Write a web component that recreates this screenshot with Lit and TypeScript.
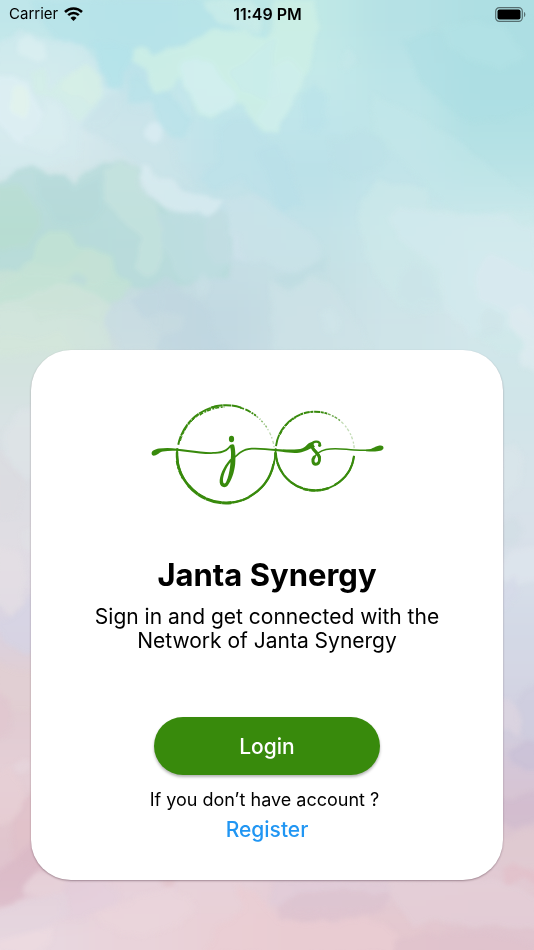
import { LitElement, html, svg, css } from "lit";
import { customElement } from "lit/decorators.js";

/** Broad washes of the sky: one row per band, one colour per column. */
const bands: { y: number; h: number; c: string[] }[] = [
  { y: -60, h: 110, c: ["#bfe6ea", "#b8e3e8", "#bce6e7", "#bfe8e6", "#b5e1e5", "#aedfe3"] },
  { y: 50, h: 50, c: ["#d2ecec", "#bde3ea", "#c6eaeb", "#c4e9e9", "#bbe4e8", "#addfe3"] },
  { y: 100, h: 50, c: ["#dbecf0", "#cfe6ec", "#bee4ea", "#bfe5ea", "#bfe5e8", "#b1e0e4"] },
  { y: 150, h: 50, c: ["#d4e7ea", "#cfe4e8", "#c1e2e9", "#bae0e8", "#c1e4e9", "#bae3e6"] },
  { y: 200, h: 50, c: ["#bcdcd6", "#c2dfdf", "#c6e1e7", "#c3e3e8", "#c9e6ea", "#d0e9ec"] },
  { y: 250, h: 50, c: ["#c6e1d6", "#c3dddd", "#c5dde4", "#c5e0e4", "#cce5e9", "#d5e9ed"] },
  { y: 300, h: 50, c: ["#d2e5dc", "#c9dae2", "#c1d8e1", "#c9dfe5", "#cee3e8", "#d3e7eb"] },
  { y: 350, h: 50, c: ["#d3e3df", "#d3e3df", "#c6dbe3", "#cbe1e6", "#cfe6e9", "#cfe6e9"] },
  { y: 400, h: 50, c: ["#d9e2e5", "#d9e2e5", "#d3e3e8", "#d3e3e8", "#d3e5ea", "#d2e4e9"] },
  { y: 450, h: 50, c: ["#dadde2", "#dadde2", "#dadde2", "#d8e0e6", "#d6e3ea", "#d6e3e9"] },
  { y: 500, h: 50, c: ["#dfdde3", "#dfdde3", "#dfdde3", "#d8e0e8", "#d6e0e8", "#d8e1e9"] },
  { y: 550, h: 50, c: ["#e1dce4", "#e0dce4", "#dedce4", "#d8dee8", "#d7dfe9", "#d7dfe9"] },
  { y: 600, h: 50, c: ["#d8d3e2", "#d8d3e2", "#d8d3e2", "#d4d8e4", "#d3dae6", "#d3d9e6"] },
  { y: 650, h: 50, c: ["#e1ced3", "#e1ced3", "#e1ced3", "#d9d5e0", "#d6d8e5", "#d4d6e4"] },
  { y: 700, h: 50, c: ["#e1cbd2", "#e1cbd2", "#e1cbd2", "#d8d0de", "#d5d2e1", "#d1cfdf"] },
  { y: 750, h: 50, c: ["#e5d0d7", "#e4cfd7", "#e0ccd6", "#d8cbd9", "#d6c8d7", "#d5c5d6"] },
  { y: 800, h: 50, c: ["#e1c6cd", "#e0c4cd", "#e0c8d1", "#dcc6d2", "#d8c4d1", "#dac4d0"] },
  { y: 850, h: 50, c: ["#dfc3ce", "#e6d1db", "#e7d2da", "#e2ccd8", "#e2ccd6", "#e3ccd4"] },
  { y: 900, h: 110, c: ["#e8d7df", "#e9d3da", "#e9d0d6", "#e6cad1", "#e4c8cf", "#e0c5cf"] },
];

/** Watercolour edges laid over the washes: [colour, opacity, outline]. */
const strokes: [string, number, string][] = [
  // upper left haze
  ["#b5e2e8", 0.8, "M30 0L210 0L262 30L268 38L240 30L215 28L185 48L150 55L130 45L95 48L55 42L45 25Z"],
  ["#d3eaee", 0.7, "M-5 45L20 30L60 42L85 45L98 65L102 85L118 92L120 110L100 125L80 130L80 160L-5 180Z"],
  ["#ddf0f3", 0.8, "M16 40L28 35L44 42L47 60L36 63L18 52Z"],
  ["#d2eee6", 0.85, "M30 72L44 68L48 92L60 80L84 64L98 72L103 95L96 106L78 122L64 105L50 95L36 95Z"],
  ["#d8f0e5", 0.7, "M68 72L88 64L98 75L103 92L92 106L80 96L60 90Z"],
  ["#def0f5", 0.9, "M-5 76L15 75L29 85L34 98L44 115L40 130L24 138L22 146L10 132L-5 120Z"],
  ["#e4f4ec", 0.95, "M11 90L19 86L28 92L28 110L22 117L12 112Z"],
  ["#d9edf0", 0.7, "M45 98L62 108L68 140L50 153L20 145L36 128L44 120Z"],
  ["#b3e3ea", 0.85, "M91 40L132 45L134 60L124 72L122 88L108 86L100 68Z"],
  ["#c8e3e8", 0.75, "M80 128L105 95L125 92L135 110L150 112L165 130L178 165L198 190L170 180L135 165L110 140Z"],
  ["#d9ecf2", 0.95, "M144 132L148 123L160 121L165 130L163 140L154 145L145 140Z"],
  // pale green cloud
  ["#cdeee8", 0.8, "M202 0L250 0L258 8L262 34L245 30L215 20L205 10Z"],
  ["#cdefe6", 0.95, "M133 49L140 46L149 49L152 55L165 49L185 45L200 36L212 27L224 31L244 30L266 39L272 30L276 0L315 0L318 30L312 62L304 84L292 98L284 118L278 132L264 132L252 122L244 105L232 100L214 118L196 114L190 95L178 78L170 88L158 93L148 82L146 68L134 62Z"],
  ["#d4eff0", 0.9, "M182 62L196 58L214 66L226 84L238 97L232 105L212 116L198 112L190 92L180 78Z"],
  ["#cbeceb", 0.8, "M232 70L246 62L262 45L274 40L274 64L282 94L266 100L254 92L240 90Z"],
  ["#d1efec", 0.8, "M274 66L290 60L304 75L298 90L288 105L280 128L268 132L256 120L268 102Z"],
  ["#b7e2e9", 0.85, "M130 78L136 72L148 84L158 92L170 90L182 105L194 122L184 138L168 134L156 118L152 102L126 102Z"],
  // centre blues
  ["#b8e2e9", 0.65, "M302 95L315 84L326 98L326 124L316 134L302 128Z"],
  ["#bbe1e9", 0.8, "M218 130L235 116L250 118L262 138L280 146L290 162L296 185L302 205L285 212L262 196L240 180L214 190L200 178L218 160Z"],
  ["#b8dfe7", 0.55, "M256 150L276 145L290 165L302 205L282 212L272 188Z"],
  ["#bbe1e7", 0.65, "M330 138L348 136L364 130L382 138L390 158L376 170L350 176L332 168Z"],
  ["#c6e8e9", 0.6, "M342 52L350 48L355 62L348 70L340 64Z"],
  ["#c4e8ea", 0.5, "M370 92L392 104L430 122L470 150L520 190L540 200L540 225L450 210L400 160L375 130Z"],
  ["#abdde2", 0.6, "M404 40L430 32L470 20L540 18L540 105L500 120L470 122L444 105L420 80Z"],
  ["#b6e3e5", 0.5, "M440 25L475 20L505 28L525 55L500 70L470 60L450 48Z"],
  // dark teal bank on the left
  ["#b5dad9", 0.9, "M-5 185L6 180L14 170L32 165L46 171L52 176L66 174L72 186L86 172L106 162L126 162L140 170L138 184L152 200L168 212L186 216L204 222L216 210L226 216L232 250L230 275L160 290L-5 270Z"],
  ["#b2d8da", 0.7, "M35 174L66 176L74 188L100 174L104 212L78 226L56 222L40 200Z"],
  ["#b7dcd0", 0.75, "M-5 186L20 184L38 210L42 226L28 246L-5 250Z"],
  ["#c4e2de", 0.85, "M104 168L118 162L136 166L138 182L158 210L164 240L160 270L146 278L134 268L142 240L124 222L104 200Z"],
  ["#d8ebf0", 0.95, "M138 178L140 166L150 166L154 176L170 178L184 190L206 196L226 202L218 210L208 218L198 210L178 212L160 206L148 192Z"],
  ["#bddde0", 0.85, "M156 216L170 214L190 210L204 216L216 212L226 218L228 240L232 262L215 280L180 280L165 250Z"],
  ["#c3dce3", 0.75, "M206 218L218 210L226 216L228 244L234 262L214 264L206 244Z"],
  // green meadow tones
  ["#c1e2d4", 0.9, "M38 242L50 230L68 232L78 246L98 250L112 256L118 276L132 284L120 300L60 310L-5 310L-5 290L28 268Z"],
  ["#c6e3d5", 0.7, "M28 262L62 268L86 250L110 256L112 276L98 288L60 284L34 292L-5 302L-5 288Z"],
  ["#b9dadb", 0.75, "M66 282L76 272L88 280L84 286Z"],
  ["#d0e4dc", 0.9, "M-5 306L28 296L60 284L90 292L110 304L104 325L112 350L-5 352Z"],
  ["#cde3d8", 0.8, "M22 300L60 286L95 295L108 305L104 322L70 315L40 320Z"],
  ["#d3e6da", 0.8, "M-5 335L30 338L60 332L75 350L-5 356Z"],
  ["#c9dde3", 0.7, "M118 340L104 328L108 310L134 292L160 290L160 350L120 352Z"],
  ["#bfd6e0", 0.8, "M130 300L150 286L168 276L182 290L205 306L214 330L228 352L155 352L160 330L140 314Z"],
  ["#c7dbe1", 0.7, "M146 318L160 312L184 316L182 330L162 336L150 345Z"],
  // centre lower
  ["#cbe3e9", 0.6, "M226 200L256 192L285 215L310 232L325 248L318 262L290 274L262 262L240 262L230 240Z"],
  ["#cfe3eb", 0.7, "M228 232L238 238L246 262L234 258Z"],
  ["#bddce1", 0.7, "M275 276L300 272L316 262L328 260L326 272L310 272L304 284L292 292L276 282Z"],
  ["#c9e0e5", 0.7, "M196 282L204 272L212 284L206 298L196 296Z"],
  ["#cde3e7", 0.7, "M270 280L290 294L310 276L330 284L350 310L372 352L270 352L272 320Z"],
  ["#d2e7eb", 0.6, "M320 312L332 308L340 318L336 334L324 330Z"],
  // right pale bank
  ["#cdeaea", 0.6, "M358 214L364 196L380 180L398 184L428 188L430 208L470 214L534 210L540 360L500 352L470 330L440 300L400 308L380 280L362 245Z"],
  ["#d4eaee", 0.7, "M400 206L445 214L500 214L540 230L540 340L490 325L470 335L444 310L440 270L400 240L388 220Z"],
  ["#cce5e8", 0.8, "M398 276L410 262L430 270L440 292L445 312L412 314L398 298Z"],
  ["#d9eaf0", 0.8, "M476 270L492 250L510 264L534 274L540 330L520 322L500 306L478 300Z"],
  ["#cee4e8", 0.7, "M478 320L488 308L504 316L502 334L482 338Z"],
  ["#deebf0", 0.85, "M508 310L522 306L540 326L540 368L524 362L520 338L510 326Z"],
  // left edge
  ["#dde4e7", 0.8, "M2 435L18 410L34 405L40 480L22 478L4 460Z"],
  ["#dcdae0", 0.6, "M-5 445L12 465L24 480L18 515L-5 520Z"],
  ["#e0e1e6", 0.7, "M22 532L34 526L36 556L22 548Z"],
  ["#e3dee4", 0.8, "M-5 546L18 550L26 576L24 604L12 616L-5 602Z"],
  ["#d5d4e4", 0.85, "M-5 622L18 614L34 590L40 650L24 654L4 640Z"],
  ["#e1cfd2", 0.8, "M-5 660L20 672L40 674L40 710L14 712L-5 690Z"],
  ["#dfc6ce", 0.7, "M-5 690L10 700L12 728L-5 742Z"],
  ["#e5d5db", 0.9, "M14 766L22 756L32 760L30 770L18 772Z"],
  ["#e7d0d5", 0.8, "M-5 772L10 766L20 782L28 802L12 822L-5 826Z"],
  ["#dfc0c9", 0.85, "M10 826L26 800L40 780L40 870L14 862Z"],
  ["#dab8c5", 0.8, "M-5 872L16 860L32 842L52 862L38 868L24 886L22 898L-5 908Z"],
  ["#e8d3db", 0.85, "M24 892L36 870L62 874L68 886L62 895L40 896Z"],
  // right edge
  ["#dcebef", 0.8, "M520 352L540 345L540 372L522 368Z"],
  ["#dae5ea", 0.8, "M500 448L514 442L524 460L518 490L500 500Z"],
  ["#d0dde4", 0.7, "M500 520L516 516L524 530L514 545L500 548Z"],
  ["#dfe5ec", 0.8, "M500 562L514 550L540 544L540 580L514 586L500 580Z"],
  ["#d5dae8", 0.8, "M500 588L514 578L520 590L508 608L500 612Z"],
  ["#cdccdd", 0.8, "M516 702L526 690L540 680L540 744L524 738L518 720Z"],
  ["#ddd5e0", 0.8, "M500 700L512 698L524 722L518 736L500 728Z"],
  ["#c8bfd6", 0.85, "M510 752L524 740L540 742L540 772L526 770L512 762Z"],
  ["#cfb9cd", 0.75, "M500 800L516 798L540 790L540 820L518 828L500 824Z"],
  ["#e0cad1", 0.8, "M500 838L540 826L540 870L500 866Z"],
  ["#e2c0c9", 0.85, "M503 868L512 863L540 874L540 886L522 880L508 884L502 880Z"],
  // bottom bank
  ["#e3d0dc", 0.8, "M66 878L100 878L120 892L118 910L92 912L80 922L60 918Z"],
  ["#e4d4df", 0.8, "M-5 912L24 900L66 892L70 914L40 930L-5 940Z"],
  ["#ecdbe1", 0.85, "M-5 940L54 926L50 944L40 955L-5 955Z"],
  ["#ead4db", 0.8, "M92 914L130 900L170 888L196 905L182 925L140 938L110 930Z"],
  ["#e1bfc5", 0.8, "M158 880L176 880L172 887L167 889Z"],
  ["#eacdd2", 0.85, "M205 955L215 930L245 910L234 882L256 894L280 920L300 924L340 922L362 917L384 924L400 938L392 955Z"],
  ["#dfcbd8", 0.85, "M270 904L276 880L388 880L390 905L330 912L290 910Z"],
  ["#dcc2ce", 0.8, "M276 906L300 892L350 890L390 894L386 908L365 914L330 920L300 922L280 918Z"],
  ["#e4cfd8", 0.8, "M390 880L500 880L540 900L540 930L470 926L440 920L412 928L402 908L388 896Z"],
  ["#dfc1cc", 0.75, "M394 942L420 934L480 932L534 942L540 955L392 955Z"],
];

@customElement("sky-backdrop")
class SkyBackdrop extends LitElement {
  static styles = css`
    :host {
      display: block;
    }
    .sky {
      display: block;
      width: 100%;
      height: 100%;
    }
  `;

  render() {
    return html`
      <svg class="sky" viewBox="0 0 534 950" preserveAspectRatio="xMidYMid slice" aria-hidden="true">
        <defs>
          <filter id="wash" x="-20%" y="-20%" width="140%" height="140%" color-interpolation-filters="sRGB">
            <feGaussianBlur stdDeviation="20" />
          </filter>
          <filter id="soft" x="-5%" y="-5%" width="110%" height="110%" color-interpolation-filters="sRGB">
            <feTurbulence type="fractalNoise" baseFrequency="0.06" numOctaves="2" seed="7" result="n" />
            <feDisplacementMap in="SourceGraphic" in2="n" scale="8" xChannelSelector="R" yChannelSelector="G" />
            <feGaussianBlur stdDeviation="2" />
          </filter>
        </defs>
        <rect width="534" height="950" fill="#d3dfe5" />
        <g filter="url(#wash)">
          ${bands.map((b) =>
            b.c.map((fill, i) => {
              const first = i === 0;
              const last = i === b.c.length - 1;
              const x = i * 89 - (first ? 60 : 0);
              const w = 89 + (first || last ? 60 : 0);
              return svg`<rect x=${x} y=${b.y} width=${w} height=${b.h + 1} fill=${fill} />`;
            }),
          )}
        </g>
        <g filter="url(#soft)" opacity=".85">
          ${strokes.map(([fill, o, d]) => svg`<path d=${d} fill=${fill} opacity=${o} />`)}
        </g>
      </svg>
    `;
  }
}

/** One brush arc of a ring; angles in degrees, clockwise from three o'clock. */
interface Arc {
  r: number;
  from: number;
  to: number;
  w: number;
  dash?: string;
  o?: number;
}

const largeRing: Arc[] = [
  { r: 48.8, from: 8, to: 178, w: 1.7 },
  { r: 48.6, from: 12, to: 62, w: 2.3 },
  { r: 49, from: 62, to: 88, w: 2.2, dash: "7 .6 10 .5" },
  { r: 49, from: 84, to: 140, w: 3, dash: "9 .4 16 .4" },
  { r: 49, from: 138, to: 182, w: 2.5 },
  { r: 50, from: 150, to: 172, w: 1.4, dash: "3 1 5 1.5" },
  { r: 49, from: 176, to: 187, w: 2 },
  { r: 48.6, from: 191, to: 258, w: 2, dash: "9 .6 13 .7 5 .5" },
  { r: 47.4, from: 196, to: 235, w: 1, dash: "5 2 3 1" },
  { r: 47, from: 236, to: 268, w: 1.5, dash: "4 1.500 2 1" },
  { r: 48.8, from: 252, to: 288, w: 2, dash: "12 .5 8 .6" },
  { r: 48.6, from: 287, to: 308, w: 1.8, dash: "4 1.500 6 1 2 1" },
  { r: 48.6, from: 309, to: 328, w: 1.4, dash: "2 2 1 1.500", o: 0.6 },
  { r: 48.6, from: 329, to: 352, w: 1.3, dash: "1.500 2.500 3 2", o: 0.35 },
  { r: 49, from: -2, to: 12, w: 1.6 },
];

const smallRing: Arc[] = [
  { r: 39.4, from: 7, to: 184, w: 1.7 },
  { r: 39.3, from: 7, to: 60, w: 2.1 },
  { r: 39.5, from: 70, to: 108, w: 2.4, dash: "7 .5 5 .6" },
  { r: 39.3, from: 108, to: 178, w: 2.2, dash: "14 .4 9 .3" },
  { r: 39.3, from: 187, to: 248, w: 1.9, dash: "12 .5 9 .7" },
  { r: 38.3, from: 205, to: 240, w: 1, dash: "4 2 3 1" },
  { r: 39.3, from: 248, to: 288, w: 2, dash: "3 .8 6 .6" },
  { r: 39.3, from: 289, to: 310, w: 1.4, dash: "3 1.500 2 1", o: 0.75 },
  { r: 39.3, from: 312, to: 356, w: 1.3, dash: "3 2.500 2 1.500", o: 0.3 },
];

function ring(cx: number, cy: number, arcs: Arc[]) {
  const at = (r: number, deg: number) => {
    const t = (deg * Math.PI) / 180;
    return `${(cx + r * Math.cos(t)).toFixed(2)} ${(cy + r * Math.sin(t)).toFixed(2)}`;
  };
  return arcs.map(
    (a) => svg`<path
      d=${`M${at(a.r, a.from)}A${a.r} ${a.r} 0 0 1 ${at(a.r, a.to)}`}
      stroke-width=${a.w}
      stroke-dasharray=${a.dash ?? "none"}
      opacity=${a.o ?? 1}
    />`,
  );
}

@customElement("brand-mark")
class BrandMark extends LitElement {
  static styles = css`
    :host {
      display: block;
    }
    .mark {
      display: block;
      width: 100%;
    }
    .ink {
      fill: #388a0c;
    }
    .line {
      fill: none;
      stroke: #388a0c;
      stroke-linecap: round;
      stroke-linejoin: round;
    }
    .dry {
      stroke-linecap: butt;
    }
  `;

  render() {
    return html`
      <svg class="mark" viewBox="149 402 236 104" role="img" aria-label="Janta Synergy logo">
        <g class="line dry">${ring(226, 454, largeRing)}</g>
        <g class="line dry">${ring(315, 451, smallRing)}</g>
        <!-- sweep into the first initial -->
        <path class="ink" d="M151.600 453.600C151.600 450.500 155 449.300 159 448.500C169 447 177 448.500 188 450C199 451.500 208 452.500 215 452C223 451.400 226.600 449.500 229.200 446L230.500 447C227.500 451.300 223.500 453.300 215.500 453.800C207 454.300 198 453.300 187.500 451.900C177 450.500 170 450.200 163 451.500C159 452.300 158.500 454.500 155 455.500C153 456 151.600 455.200 151.600 453.600Z" />
        <ellipse class="ink" cx="231.500" cy="439" rx="2.600" ry="3.300" />
        <path class="ink" fill-rule="evenodd" d="M229 446.500C230 444.500 233 443.500 234 444.800C235.400 448 235.800 458 235.200 464C234.400 472 231.400 481 227.700 485.500C225 488.500 220.200 487.300 219.700 482.500C219.200 476 223.800 466.500 229 460.500C229.800 459.600 230.300 459.200 230.800 458.800C231.300 454 231 449.500 230.200 447.500ZM230.500 462.300C226.200 467.500 222.800 475.500 223 481C223.200 484 224.800 484.200 226 482.200C228.400 478.100 230.100 468.500 230.500 462.300Z" />
        <!-- sweep between the initials -->
        <path class="ink" d="M233.500 457C238 453.500 241 449.500 248 448.200C257 446.800 267 448.700 276 449.100C286 449.500 297 450.300 302.500 448.300C306.500 446.500 307.500 442.800 312 442L315 447C310 448 306 451.900 299 452.700C290 453.500 283 451.400 275.500 451C266 450.500 257 448.900 248.500 450C242 450.900 239 455.200 234 458.600Z" />
        <path class="line" d="M320 444.500C319.800 441 313.500 440.500 312 444C310.500 448.500 318 452 319.700 457" stroke-width="2.400" />
        <path class="line" d="M312 445C311 450 318.500 452 319.500 458C320 463 317.500 464.300 315.700 464.200C312.500 464 312.200 459.500 314.200 457" stroke-width="3" />
        <circle class="ink" cx="319.600" cy="445.300" r="1.600" />
        <path class="line" d="M313.500 458.500C315.500 454.500 320 451 326 449.500C335 447.400 344 449.300 354 449.900C362 450.500 370 450.700 375 449.500" stroke-width="1.500" />
        <path class="ink" d="M366 449.700C372 449.600 374 447 378.500 445.800C382 445 384 446.200 383.400 448.600C382.500 451.500 376 452 366 451.300Z" />
      </svg>
    `;
  }
}

@customElement("app-root")
class AppRoot extends LitElement {
  static styles = css`
    :host {
      display: block;
      font-family: Inter, "Liberation Sans", sans-serif;
      color: #000;
    }
    .screen {
      position: relative;
      isolation: isolate;
      overflow: hidden;
      display: flex;
      flex-direction: column;
      min-height: 100vh;
    }
    .backdrop {
      position: absolute;
      inset: 0;
      z-index: -1;
    }
    .status {
      display: grid;
      grid-template-columns: 1fr auto 1fr;
      align-items: center;
      height: 28px;
      padding: 0 8px 0 9px;
      font-size: 15px;
      line-height: 20px;
    }
    .carrier {
      display: flex;
      align-items: center;
      gap: 6px;
    }
    .time {
      font-size: 16px;
      font-weight: 600;
    }
    .battery {
      justify-self: end;
    }
    .icon {
      display: block;
    }
    .card {
      display: flex;
      flex-direction: column;
      align-items: center;
      margin: auto 31px 70px;
      padding: 52px 32px 36px;
      border-radius: 40px;
      background: #fff;
      box-shadow: 0 1px 2px rgba(60, 30, 45, 0.4);
      text-align: center;
    }
    .logo {
      width: 236px;
    }
    .title {
      margin: 49px 0 0;
      font-size: 31px;
      line-height: 40px;
      font-weight: 700;
    }
    .lead {
      margin: 10px 0 0;
      max-width: 360px;
      font-size: 21px;
      line-height: 24px;
    }
    .login {
      width: 226px;
      height: 58px;
      margin: 64px 0 0;
      padding: 0;
      border: 0;
      border-radius: 29px;
      background: #388a0c;
      box-shadow: 0 2px 3px rgba(0, 0, 0, 0.3);
      color: #fff;
      font: inherit;
      font-size: 21px;
      font-weight: 500;
      cursor: pointer;
    }
    .hint {
      margin: 13px 0 0;
      font-size: 18px;
      line-height: 24px;
    }
    .register {
      margin: 4px 0 0;
      font-size: 21px;
      line-height: 28px;
      font-weight: 500;
      color: #2196f3;
      text-decoration: none;
    }
  `;

  render() {
    return html`
      <div class="screen">
        <sky-backdrop class="backdrop"></sky-backdrop>
        <header class="status">
          <div class="carrier">
            <span>Carrier</span>
            <svg class="icon" width="19" height="14" viewBox="0 0 19 14" role="img" aria-label="Wi-Fi">
              <g fill="none" stroke="#000" stroke-width="2.500">
                <path d="M1 5A12.200 12.200 0 0 1 18 5" />
                <path d="M4.200 8.200A7.600 7.600 0 0 1 14.800 8.200" />
              </g>
              <path d="M9.500 14L6.500 11A4.300 4.300 0 0 1 12.500 11Z" />
            </svg>
          </div>
          <time class="time">11:49 PM</time>
          <svg class="icon battery" width="31" height="15" viewBox="0 0 31 15" role="img" aria-label="Battery full">
            <rect x=".7" y=".7" width="26.600" height="13.600" rx="3.600" fill="none" stroke="#000" stroke-opacity=".5" stroke-width="1.200" />
            <rect x="2.500" y="2.500" width="23" height="10" rx="2" />
            <path d="M29 5C30.800 5.600 30.800 9.400 29 10Z" fill-opacity=".5" />
          </svg>
        </header>
        <main class="card">
          <brand-mark class="logo"></brand-mark>
          <h1 class="title">Janta Synergy</h1>
          <p class="lead">Sign in and get connected with the Network of Janta Synergy</p>
          <button class="login" type="button">Login</button>
          <p class="hint">If you don’t have account ?&nbsp;</p>
          <a class="register" href="#register">Register</a>
        </main>
      </div>
    `;
  }
}
